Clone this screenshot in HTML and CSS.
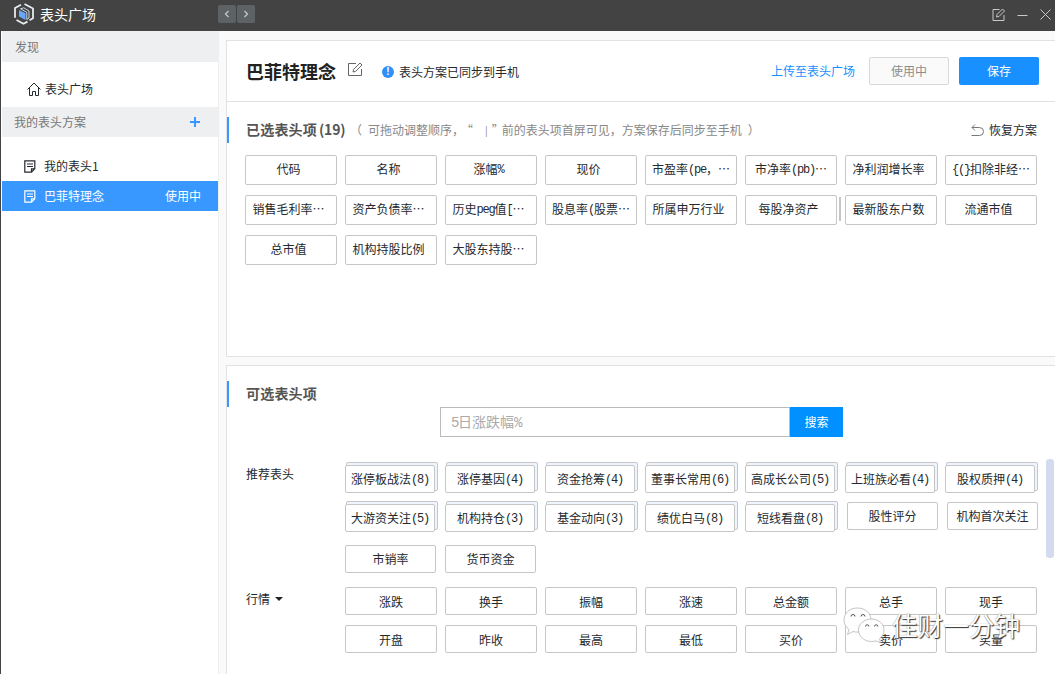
FILE: index.html
```html
<!DOCTYPE html>
<html lang="zh-CN">
<head>
  <meta charset="UTF-8">
  <meta name="viewport" content="width=device-width, initial-scale=1.0">
  <title>表头广场</title>
  <link rel="stylesheet" href="styles.css">
</head>
<body>
  <div class="window">
    <header class="titlebar">
      <svg class="logo" width="22" height="22" viewBox="0 0 22 22">
        <path d="M8 1.800 2 5v9.800M3.500 17l7 3.800 4-2.200M16.500 17.300l3.500-2V5.500L11.500 1" fill="none" stroke="#e6ebf0" stroke-width="1.800"/>
        <path d="M6 7 12.500 10.200V17L6 13.600z" fill="#69a5ff"/>
        <path d="M7.500 5.800 10.800 4.800 16 8v7l-2.200 1.500V9.300L7.500 5.800" fill="none" stroke="#cdd6e0" stroke-width="1"/>
      </svg>
      <span class="app-name">表头广场</span>
      <div class="history">
        <button><svg width="6" height="8" viewBox="0 0 6 8"><path d="M4.500 1 1.500 4l3 3"/></svg></button>
        <button><svg width="6" height="8" viewBox="0 0 6 8"><path d="M1.500 1l3 3-3 3"/></svg></button>
      </div>
      <div class="window-actions">
        <svg width="13" height="13" viewBox="0 0 13 13"><path d="M7 1.500H.5v11h11V7"/><path d="M4 9l.5-2.500L10 1l2 2-5.500 5.500z"/></svg>
        <svg width="11" height="13" viewBox="0 0 11 13"><path d="M.5 7.500h10"/></svg>
        <svg width="11" height="13" viewBox="0 0 11 13"><path d="M.5 1.500l10 10M10.500 1.500l-10 10"/></svg>
      </div>
    </header>

    <div class="body">
      <!-- 左侧导航 -->
      <nav class="sidebar">
        <div class="group-title">发现</div>
        <a class="nav-item home">
          <svg width="14" height="14" viewBox="0 0 14 14"><path d="M.5 7.500 7 1l6.500 6.500M2.500 6v7.500h3V9.500h3v4h3V6"/></svg>
          <span>表头广场</span>
        </a>
        <div class="group-title mine">
          <span>我的表头方案</span>
          <svg width="10" height="10" viewBox="0 0 10 10"><path d="M5 0v10M0 5h10"/></svg>
        </div>
        <a class="nav-item first">
          <svg width="12" height="13" viewBox="0 0 12 13"><path d="M7.500 12.200H.8V.8h10v8zM7.500 12V8.800h3.200M3 4h6M3 6.500h6"/></svg>
          <span>我的表头1</span>
        </a>
        <a class="nav-item active">
          <svg width="12" height="13" viewBox="0 0 12 13"><path d="M7.500 12.200H.8V.8h10v8zM7.500 12V8.800h3.200M3 4h6M3 6.500h6"/></svg>
          <span>巴菲特理念</span>
          <span class="status">使用中</span>
        </a>
      </nav>

      <main class="main">
        <!-- 已选表头项 -->
        <section class="panel selected-panel">
          <div class="plan-header">
            <h1>巴菲特理念</h1>
            <svg class="edit" width="15" height="15" viewBox="0 0 15 15"><path d="M8 1.500H.5v12h13V7"/><path d="M5 10l.6-2.600L12 1l2 2-6.400 6.400z"/></svg>
            <span class="info">!</span>
            <span class="sync">表头方案已同步到手机</span>
            <a class="upload">上传至表头广场</a>
            <button class="btn btn-using">使用中</button>
            <button class="btn btn-save">保存</button>
          </div>
          <div class="section-title">
            <h2>已选表头项<span class="h2-num">(19)</span></h2>
            <span class="hint"><span>（</span><span class="drag">可拖动调整顺序，</span><span class="quote">“</span><span class="bar">|</span><span>”</span><span class="rest">前的表头项首屏可见，方案保存后同步至手机</span><span class="close">）</span></span>
            <a class="restore">
              <svg width="13" height="13" viewBox="0 0 13 13"><path d="M4 .5 1 3.500l3 3M1 3.500h7.500a4 4 0 0 1 0 8H.5"/></svg>
              恢复方案
            </a>
          </div>
          <div class="selected-grid">
            <div class="tag">代码</div>
            <div class="tag">名称</div>
            <div class="tag">涨幅<span class="n">%</span></div>
            <div class="tag">现价</div>
            <div class="tag long">市盈率<span class="n">(pe</span>，…</div>
            <div class="tag long">市净率<span class="n">(pb)</span>…</div>
            <div class="tag">净利润增长率</div>
            <div class="tag long"><span class="n">{(}</span>扣除非经…</div>
            <div class="tag">销售毛利率…</div>
            <div class="tag">资产负债率…</div>
            <div class="tag">历史<span class="n">peg</span>值<span class="n">[</span>…</div>
            <div class="tag long">股息率<span class="n">(</span>股票…</div>
            <div class="tag">所属申万行业</div>
            <div class="tag screen-end">每股净资产</div>
            <div class="tag">最新股东户数</div>
            <div class="tag">流通市值</div>
            <div class="tag">总市值</div>
            <div class="tag">机构持股比例</div>
            <div class="tag">大股东持股…</div>
          </div>
        </section>

        <!-- 可选表头项 -->
        <section class="panel optional-panel">
          <div class="section-title">
            <h2>可选表头项</h2>
          </div>
          <div class="search">
            <div class="search-input"><span class="n">5</span>日涨跌幅<span class="n">%</span></div>
            <button>搜索</button>
          </div>
          <div class="option-row recommend">
            <div class="label">推荐表头</div>
            <div class="option-grid">
              <div class="pack"><div class="tag">涨停板战法<span class="n">(8)</span></div></div>
              <div class="pack"><div class="tag">涨停基因<span class="n">(4)</span></div></div>
              <div class="pack"><div class="tag">资金抢筹<span class="n">(4)</span></div></div>
              <div class="pack"><div class="tag">董事长常用<span class="n">(6)</span></div></div>
              <div class="pack"><div class="tag">高成长公司<span class="n">(5)</span></div></div>
              <div class="pack"><div class="tag">上班族必看<span class="n">(4)</span></div></div>
              <div class="pack"><div class="tag">股权质押<span class="n">(4)</span></div></div>
              <div class="pack"><div class="tag">大游资关注<span class="n">(5)</span></div></div>
              <div class="pack"><div class="tag">机构持仓<span class="n">(3)</span></div></div>
              <div class="pack"><div class="tag">基金动向<span class="n">(3)</span></div></div>
              <div class="pack"><div class="tag">绩优白马<span class="n">(8)</span></div></div>
              <div class="pack"><div class="tag">短线看盘<span class="n">(8)</span></div></div>
              <div class="tag single">股性评分</div>
              <div class="tag single">机构首次关注</div>
              <div class="tag lower">市销率</div>
              <div class="tag lower">货币资金</div>
            </div>
          </div>
          <div class="option-row quotes">
            <div class="label">行情<i class="caret"></i></div>
            <div class="option-grid">
              <div class="tag">涨跌</div>
              <div class="tag">换手</div>
              <div class="tag">振幅</div>
              <div class="tag">涨速</div>
              <div class="tag">总金额</div>
              <div class="tag">总手</div>
              <div class="tag">现手</div>
              <div class="tag">开盘</div>
              <div class="tag">昨收</div>
              <div class="tag">最高</div>
              <div class="tag">最低</div>
              <div class="tag">买价</div>
              <div class="tag">卖价</div>
              <div class="tag">买量</div>
            </div>
          </div>
          <div class="scroll-thumb"></div>
        </section>
      </main>
    </div>

    <!-- 水印 -->
    <div class="watermark">
      <svg width="42" height="36" viewBox="0 0 42 36">
        <path class="bubble" d="M14.500 1C6.500 1 1 6.300 1 13c0 4 2 7.300 5 9.500l-1.500 5 5.500-3c1.500.4 3 .6 4.500.6C22 25 28 20 28 13S22 1 14.500 1z"/>
        <path class="bubble" d="M28.500 12C21 12 15.500 17 15.500 23S21 34.500 28.500 34.500c1.600 0 3-.2 4.500-.7l4.500 2-1-4c3-2.200 4.500-5.300 4.500-8.800C41 17 36 12 28.500 12z"/>
        <path class="eyes" d="M8 9.500a2 2 0 0 1 4 0M18 9.500a2 2 0 0 1 4 0M22.500 19.500a1.700 1.700 0 0 1 3.400 0M31.500 19.500a1.700 1.700 0 0 1 3.400 0"/>
      </svg>
      <span>佳财一分钟</span>
    </div>
  </div>
</body>
</html>
```
FILE: styles.css
```css
* {
  box-sizing: border-box;
}

body {
  margin: 0;
  font-family: "Noto Sans CJK SC", "Liberation Sans", sans-serif;
  font-size: 12px;
  line-height: 18px;
  color: #24292e;
}

h1, h2 {
  margin: 0;
}

button {
  font-family: inherit;
  font-size: 12px;
  padding: 0;
  border: none;
}

svg {
  flex: none;
}

.window {
  position: relative;
  width: 1055px;
  height: 674px;
  overflow: hidden;
  display: flex;
  flex-direction: column;
  background: #fafafa;
}

/* 标题栏 */
.titlebar {
  flex: none;
  height: 31px;
  display: flex;
  align-items: center;
  padding: 0 4px 3px 13px;
  background: #434343;
  color: #fff;
}

.app-name {
  flex: none;
  width: 183px;
  margin-top: -1px;
  padding-left: 5px;
  font-size: 14px;
}

.history {
  display: flex;
  gap: 1px;
}

.history button {
  width: 18px;
  height: 18px;
  display: flex;
  align-items: center;
  justify-content: center;
  background: #5d6265;
  border-radius: 2px;
}

.history path {
  fill: none;
  stroke: #c4c8ca;
  stroke-width: 1.3;
}

.window-actions {
  display: flex;
  gap: 12px;
  margin-left: auto;
}

.window-actions svg:first-child {
  margin-right: -1px;
  width: 14px;
}

.window-actions path {
  fill: none;
  stroke: #c8c8c8;
}

.body {
  flex: 1;
  display: flex;
  min-height: 0;
}

/* 左侧导航 */
.sidebar {
  flex: none;
  width: 219px;
  background: #fff;
  border-left: 1px solid #434343;
  border-right: 1px solid #eee;
  padding-left: 1px;
}

.group-title {
  height: 31px;
  display: flex;
  align-items: center;
  justify-content: space-between;
  padding: 1px 18px 0 13px;
  background: #eeeff1;
  color: #777;
}

.group-title.mine {
  height: 30px;
  padding: 0 18px 1px 12px;
}

.group-title path {
  stroke: #3898ff;
  stroke-width: 2;
}

.nav-item {
  height: 30px;
  display: flex;
  align-items: center;
  padding: 0 17px 0 22px;
}

.nav-item path {
  fill: none;
  stroke: currentColor;
  stroke-width: 1.2;
}

.nav-item span {
  margin-left: 8px;
}

.nav-item.home {
  height: 45px;
  padding: 8px 0 0 25px;
}

.nav-item.home path {
  stroke-width: 1;
}

.nav-item.home span {
  margin-left: 4px;
}

.nav-item.first {
  margin-top: 14px;
}

.nav-item.active {
  background: #3898ff;
  color: #fff;
}

.nav-item .status {
  margin-left: auto;
}

/* 右侧内容 */
.main {
  flex: 1;
  min-width: 0;
  padding: 9px 0 0 7px;
}

.panel {
  background: #fff;
  border: 1px solid #e2e2e2;
  border-right: none;
}

.selected-panel {
  height: 317px;
}

.plan-header {
  height: 61px;
  display: flex;
  align-items: center;
  padding: 0 16px 0 19px;
  border-bottom: 1px solid #e2e2e2;
}

.plan-header h1 {
  font-size: 18px;
  color: #222;
}

.plan-header .edit {
  margin: -3px 19px 0 12px;
}

.edit path {
  fill: none;
  stroke: #666;
}

.info {
  width: 12px;
  height: 12px;
  margin: 2px 5px 0 0;
  border-radius: 50%;
  background: #2f8ffb;
  color: #fff;
  font: bold 10px/12px "Liberation Sans", sans-serif;
  text-align: center;
}

.sync {
  margin-top: 2px;
}

.upload {
  margin: 0 14px 0 auto;
  color: #1890ff;
}

.btn {
  width: 80px;
  height: 28px;
  margin-top: -1px;
  border-radius: 2px;
}

.btn-using {
  margin-right: 10px;
  border: 1px solid #d9d9d9;
  background: #fafafa;
  color: #8c8c8c;
}

.btn-save {
  background: #1890ff;
  color: #fff;
}

.section-title {
  height: 26px;
  display: flex;
  align-items: center;
  margin-top: 15px;
  padding: 0 18px 0 17px;
  border-left: 2px solid #3898ff;
}

.section-title h2 {
  width: 104px;
  margin-top: -2px;
  font-size: 14px;
  letter-spacing: 0.2px;
  color: #555;
  white-space: nowrap;
}

.h2-num {
  margin-left: 2px;
  letter-spacing: -0.2px;
}

.hint {
  display: flex;
  color: #888;
  white-space: nowrap;
}

.hint .drag {
  margin-left: 6px;
}

.hint .quote {
  margin-left: -3px;
}

.hint .bar {
  margin: 0 4px 0 12px;
  font-size: 10px;
}

.hint .rest {
  margin-left: -2px;
}

.hint .close {
  margin-left: 6px;
}

.restore {
  display: flex;
  align-items: center;
  gap: 5px;
  margin-left: auto;
}

.restore path {
  fill: none;
  stroke: #777;
}

/* 表头标签 */
.tag {
  height: 28px;
  display: flex;
  align-items: center;
  justify-content: center;
  border: 1px solid #c6c6c6;
  border-radius: 2px;
  background: #fff;
  white-space: nowrap;
}

/* 半角字符 */
.n {
  padding-top: 2px;
  font-family: "Liberation Mono", monospace;
  letter-spacing: -1.2px;
}

.selected-grid {
  display: grid;
  grid-template-columns: repeat(8, 92px);
  gap: 10px 8px;
  padding: 12px 0 0 18px;
}

.selected-grid .tag {
  height: 30px;
  padding: 0 5px 2px 0;
}

.selected-grid .tag.long {
  padding-right: 0;
}

.screen-end {
  position: relative;
}

/* 首屏分隔线 */
.screen-end::after {
  content: "";
  position: absolute;
  top: 1px;
  right: -5px;
  width: 2px;
  height: 24px;
  background: #c6c6c6;
}

.optional-panel {
  position: relative;
  height: 320px;
  margin-top: 8px;
}

.search {
  display: flex;
  margin: 0 0 0 213px;
}

.search-input {
  width: 350px;
  height: 30px;
  padding-left: 10px;
  border: 1px solid #bbb;
  font-size: 14px;
  line-height: 26px;
  color: #aaa;
}

.search-input .n {
  letter-spacing: -1.4px;
}

.search button {
  width: 53px;
  padding-bottom: 2px;
  background: #0090ff;
  color: #fff;
}

.option-row {
  display: flex;
  padding-left: 19px;
}

.recommend {
  margin-top: 25px;
}

.quotes {
  margin-top: 14px;
}

.label {
  width: 99px;
  padding-top: 3px;
}

.caret {
  display: inline-block;
  margin: 0 0 3px 5px;
  border: 4px solid transparent;
  border-top-color: #222;
  border-bottom: none;
}

.option-grid {
  display: grid;
  grid-template-columns: repeat(7, 92px);
  gap: 8px;
}

.quotes .option-grid {
  gap: 10px 8px;
}

.quotes .tag {
  padding-top: 1px;
}

.pack {
  position: relative;
  width: 93px;
  height: 31px;
  padding-top: 3px;
}

.pack::before {
  content: "";
  position: absolute;
  top: 0;
  left: 1px;
  width: 90px;
  height: 27px;
  border: 1px solid #c6c6c6;
  border-radius: 2px;
  background: #eff5ff;
}

.pack .tag {
  position: relative;
  width: 90px;
}

.single {
  width: 91px;
  margin: 1px 0 0 2px;
}

.lower {
  width: 91px;
  margin-top: 5px;
}

.scroll-thumb {
  position: absolute;
  top: 93px;
  right: 1px;
  width: 8px;
  height: 99px;
  border-radius: 3px;
  background: #d3dcef;
}

/* 水印 */
.watermark {
  position: absolute;
  left: 843px;
  top: 607px;
  display: flex;
  align-items: center;
  gap: 7px;
  font-size: 25.6px;
  line-height: 36px;
  color: #fff;
  text-shadow: 1px 1px 1px #333, 0 0 1px #777;
}

.bubble {
  fill: rgba(255, 255, 255, 0.92);
  stroke: #aaa;
  stroke-width: 0.7;
}

.eyes {
  fill: none;
  stroke: #555;
}
```
